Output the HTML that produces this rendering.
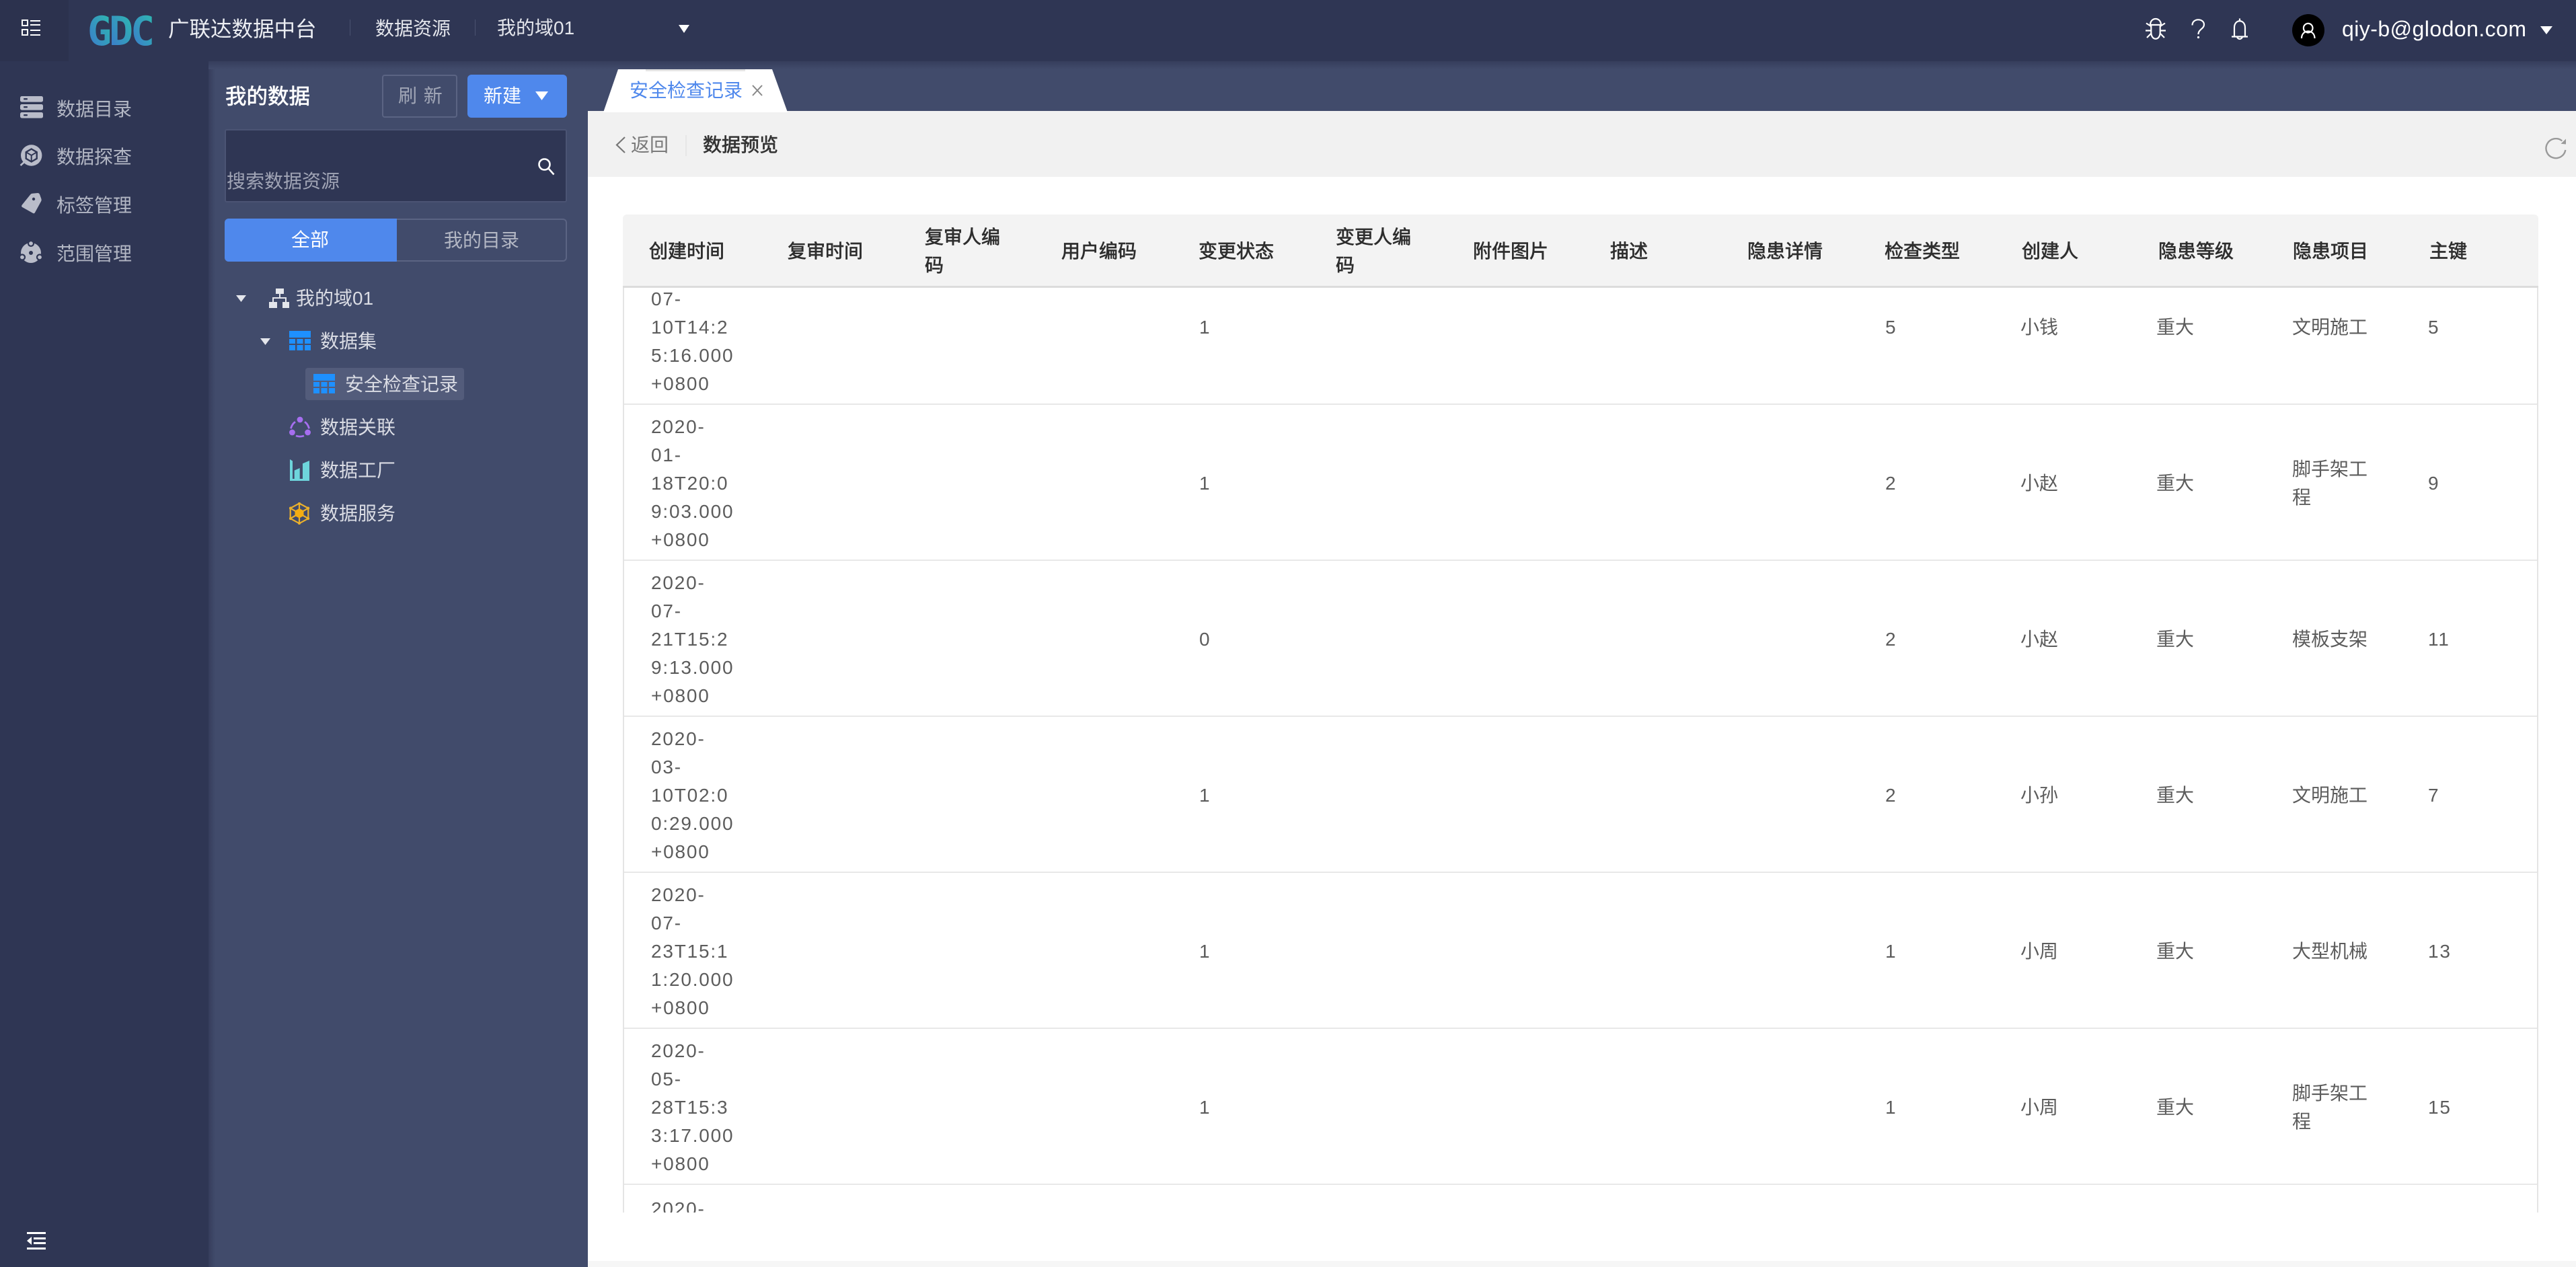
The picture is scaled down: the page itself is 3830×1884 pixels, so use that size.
<!DOCTYPE html>
<html lang="zh-CN">
<head>
<meta charset="utf-8">
<title>数据预览</title>
<style>
*{box-sizing:border-box;margin:0;padding:0}
html,body{width:3830px;height:1884px;overflow:hidden;background:#fff}
body{position:relative;font-family:"Liberation Sans","Noto Sans CJK SC",sans-serif;font-size:28px}
.a{position:absolute}
.t{position:absolute;white-space:nowrap;line-height:40px;font-size:28px}
.i{position:absolute;display:block}
.nav{color:#b3b7c4;left:84px}
.tr{color:#dadce4}
.b{-webkit-text-stroke:.7px currentColor}
.row{position:absolute;left:0;width:2848px;height:232px;border-bottom:2px solid #e8e8e8}
.c{position:absolute;top:2px;height:230px;display:flex;align-items:center;line-height:42px;color:#5c5c5c;white-space:nowrap}
.d{letter-spacing:1.8px}
.h{position:absolute;top:2px;height:106px;display:flex;align-items:center;line-height:42px;color:#2e2e2e;-webkit-text-stroke:.7px #2e2e2e;white-space:nowrap}
</style>
</head>
<body>
<!-- backgrounds -->
<div class="a" style="left:0;top:0;width:310px;height:1884px;background:#2f3654"></div>
<div class="a" style="left:310px;top:0;width:564px;height:1884px;background:#414b6b"></div>
<div class="a" style="left:874px;top:91px;width:2956px;height:75px;background:#414b6b"></div>
<div class="a" style="left:310px;top:91px;width:10px;height:1793px;background:linear-gradient(90deg,#363d5c,#414b6b)"></div>
<div class="a" style="left:310px;top:91px;width:3520px;height:12px;background:linear-gradient(180deg,#363d5c,#414b6b)"></div>
<div class="a" style="left:0;top:0;width:3830px;height:91px;background:#2f3654"></div>
<div class="a" style="left:0;top:0;width:102px;height:91px;background:#2c324e"></div>
<div class="a" style="left:874px;top:165px;width:2956px;height:98px;background:#f1f1f1"></div>
<div class="a" style="left:874px;top:1875px;width:2956px;height:9px;background:#f6f6f6"></div>

<!-- top bar -->
<svg class="i" style="left:32px;top:29px" width="28" height="25" viewBox="0 0 28 25" fill="none" stroke="#fff" stroke-width="2"><rect x="1" y="1" width="8" height="8"/><rect x="1" y="15" width="8" height="8"/><path d="M13 2h15M13 8h15M13 16h15M13 23h15"/></svg>
<svg class="i" style="left:125px;top:15px" width="110" height="60" viewBox="0 0 110 60" font-family="DejaVu Sans Mono" font-weight="700" font-size="60"><defs><linearGradient id="lg" x1="0" y1="1" x2="1" y2="0"><stop offset="0" stop-color="#3d72d0"/><stop offset="1" stop-color="#2cc0ac"/></linearGradient></defs><text x="5" y="52" fill="url(#lg)">G</text><text x="37" y="52" fill="url(#lg)">D</text><text x="69" y="52" fill="url(#lg)">C</text></svg>
<div class="t" style="left:250px;top:23px;font-size:31.5px;color:#eceef3">广联达数据中台</div>
<div class="a" style="left:520px;top:29px;width:1px;height:24px;background:#4a5270"></div>
<div class="t" style="left:558px;top:23px;color:#e4e6ec">数据资源</div>
<div class="a" style="left:706px;top:29px;width:1px;height:24px;background:#4a5270"></div>
<div class="t" style="left:739px;top:22px;color:#e4e6ec">我的域01</div>
<svg class="i" style="left:1009px;top:37px" width="16" height="12"><path d="M0 0h16L8 12z" fill="#fff"/></svg>

<svg class="i" style="left:3190px;top:26px" width="34" height="34" viewBox="0 0 34 34" fill="none" stroke="#fff" stroke-width="2.2"><path d="M7 11C7 -1 23 -1 23 11"/><path d="M8.300 11h13.400v11c0 13-13.400 13-13.400 0z"/><path d="M1 8.500L8 13M29 8.500L22 13M0 19.500h8M30 19.500h-8M2 30l6-6M28 30l-6-6"/></svg>
<svg class="i" style="left:3256px;top:28px" width="24" height="32" viewBox="0 0 24 32" fill="none" stroke="#fff" stroke-width="2.200"><path d="M3.500 9.500C3.500 -1.500 21 -1 21 8.500C21 15 12.500 15.500 12.500 23"/><circle cx="12.500" cy="27.500" r="1.600" fill="#fff" stroke="none"/></svg>
<svg class="i" style="left:3317px;top:26px" width="27" height="34" viewBox="0 0 27 34" fill="none" stroke="#fff" stroke-width="2.2"><path d="M13 1.500v4.500M5 28V15C5 2 21 2 21 15V28M1 28.500h24M9 29c2 4 6 4 8 0"/></svg>
<div class="a" style="left:3408px;top:21px;width:48px;height:48px;border-radius:50%;background:#000"></div>
<svg class="i" style="left:3419px;top:32px" width="26" height="27" viewBox="0 0 26 27" fill="none" stroke="#fff" stroke-width="2.200"><circle cx="12.700" cy="9.700" r="6.800"/><path d="M3 25c0-14 19.500-14 19.500 0"/></svg>
<div class="t" style="left:3482px;top:23px;font-size:32px;color:#fff;letter-spacing:.45px">qiy-b@glodon.com</div>
<svg class="i" style="left:3777px;top:39px" width="18" height="12"><path d="M0 0h18L9 12z" fill="#fff"/></svg>

<!-- left nav -->
<svg class="i" style="left:30px;top:143px" width="35" height="33" viewBox="0 0 35 33" fill="#b9bcc9"><rect y="0" width="34" height="8.600" rx="2.500"/><rect y="12" width="34" height="8.600" rx="2.500"/><rect y="24" width="34" height="8.600" rx="2.500"/><g fill="#2f3654"><rect x="5" y="3" width="6" height="2.400" rx="1"/><rect x="5" y="15" width="6" height="2.400" rx="1"/><rect x="5" y="27" width="6" height="2.400" rx="1"/></g></svg>
<div class="t nav" style="top:143px">数据目录</div>
<svg class="i" style="left:29px;top:214px" width="36" height="34" viewBox="0 0 36 34"><circle cx="17.700" cy="17" r="15.700" fill="#b9bcc9"/><path d="M7 27L1.500 32" stroke="#b9bcc9" stroke-width="2.600" fill="none"/><path d="M17.700 7.500l8 4.700v9.600l-8 4.700-8-4.700v-9.600z" fill="none" stroke="#2f3654" stroke-width="2.400"/><path d="M9.700 12.200l8 4.800 8-4.800M17.700 17v9.500" fill="none" stroke="#2f3654" stroke-width="2"/></svg>
<div class="t nav" style="top:214px">数据探查</div>
<svg class="i" style="left:31px;top:286px" width="32" height="34" viewBox="0 0 32 34"><path d="M14 3.500Q15 2 17 1.800L25 1Q27 1 28 3L30.500 10Q31 12 30 13.500L21 30Q20 32 18 31L2 22Q0.500 21 1.500 19z" fill="#b9bcc9"/><circle cx="19" cy="10" r="2.200" fill="#2f3654"/></svg>
<div class="t nav" style="top:286px">标签管理</div>
<svg class="i" style="left:29px;top:357px" width="36" height="34" viewBox="0 0 36 34" fill="#b9bcc9"><circle cx="17" cy="19" r="15"/><g stroke="#2f3654" stroke-width="2.200"><circle cx="17" cy="5" r="4"/><circle cx="4" cy="25.500" r="4"/><circle cx="30" cy="25.500" r="4"/></g><circle cx="17" cy="19" r="3" fill="#2f3654"/></svg>
<div class="t nav" style="top:358px">范围管理</div>
<svg class="i" style="left:40px;top:1832px" width="28" height="26" viewBox="0 0 28 26" fill="#fff"><rect width="28" height="3"/><rect y="23" width="28" height="3"/><rect x="10" y="8" width="18" height="3"/><rect x="10" y="15" width="18" height="3"/><path d="M7 7v12L0 13z"/></svg>

<!-- panel -->
<div class="t b" style="left:335px;top:123px;font-size:31.500px;color:#fff">我的数据</div>
<div class="a" style="left:568px;top:111px;width:112px;height:64px;border:2px solid #5b6483;border-radius:4px"></div>
<div class="t" style="left:592px;top:123px;color:#a2a7b7;word-spacing:2px">刷 新</div>
<div class="a" style="left:695px;top:111px;width:148px;height:64px;background:#4f88ec;border-radius:6px"></div>
<div class="t" style="left:719px;top:123px;color:#fff">新建</div>
<svg class="i" style="left:796px;top:136px" width="19" height="13"><path d="M0 0h19L9.500 13z" fill="#fff"/></svg>

<div class="a" style="left:334px;top:192px;width:509px;height:109px;background:#2f3654;border:2px solid #4b5474;border-radius:3px"></div>
<div class="t" style="left:337px;top:250px;color:#a0a4b5">搜索数据资源</div>
<svg class="i" style="left:799px;top:234px" width="27" height="27" viewBox="0 0 27 27" fill="none" stroke="#fff" stroke-width="2.600"><circle cx="10.500" cy="10.500" r="8"/><path d="M16.500 16.500l8 9"/></svg>

<div class="a" style="left:334px;top:325px;width:509px;height:64px;border:2px solid #5b6483;border-radius:6px"></div>
<div class="a" style="left:334px;top:325px;width:256px;height:64px;background:#4f88ec;border-radius:6px 0 0 6px"></div>
<div class="t" style="left:433px;top:337px;color:#fff">全部</div>
<div class="t" style="left:660px;top:338px;color:#b3b7c4">我的目录</div>

<!-- tree -->
<svg class="i" style="left:351px;top:439px" width="15" height="10"><path d="M0 0h15L7.500 10z" fill="#e4e6ec"/></svg>
<svg class="i" style="left:400px;top:429px" width="30" height="29" viewBox="0 0 30 29" fill="#e4e6ec"><rect x="10" y="0" width="12" height="8"/><rect x="0" y="20" width="12" height="9"/><rect x="20" y="20" width="10" height="9"/><path d="M15 8h2v5h9v7h-2v-5H7v5H5v-7h10z"/></svg>
<div class="t tr" style="left:440px;top:424px">我的域01</div>
<svg class="i" style="left:387px;top:503px" width="15" height="10"><path d="M0 0h15L7.500 10z" fill="#e4e6ec"/></svg>
<svg class="i" style="left:430px;top:492px" width="32" height="29" viewBox="0 0 32 29" fill="#1e90ff"><rect width="32" height="10"/><rect y="12" width="9" height="7"/><rect x="11.500" y="12" width="9" height="7"/><rect x="23" y="12" width="9" height="7"/><rect y="21" width="9" height="8"/><rect x="11.500" y="21" width="9" height="8"/><rect x="23" y="21" width="9" height="8"/></svg>
<div class="t tr" style="left:476px;top:488px">数据集</div>
<div class="a" style="left:454px;top:547px;width:236px;height:48px;background:#535c7b;border-radius:4px"></div>
<svg class="i" style="left:466px;top:556px" width="32" height="29" viewBox="0 0 32 29" fill="#1e90ff"><rect width="32" height="10"/><rect y="12" width="9" height="7"/><rect x="11.500" y="12" width="9" height="7"/><rect x="23" y="12" width="9" height="7"/><rect y="21" width="9" height="8"/><rect x="11.500" y="21" width="9" height="8"/><rect x="23" y="21" width="9" height="8"/></svg>
<div class="t tr" style="left:513px;top:552px">安全检查记录</div>
<svg class="i" style="left:430px;top:619px" width="32" height="33" viewBox="0 0 32 33"><g fill="#a66ef0"><circle cx="16" cy="5" r="4.400"/><circle cx="4.400" cy="24" r="4.400"/><circle cx="27.600" cy="24" r="4.400"/></g><g fill="none" stroke="#a66ef0" stroke-width="2.800"><path d="M2.500 18.300Q4 11.500 9 8.300M29.500 18.300Q28 11.500 23 8.300M10 29Q16 31.300 22 29"/></g></svg>
<div class="t tr" style="left:476px;top:616px">数据关联</div>
<svg class="i" style="left:431px;top:683px" width="29" height="32" viewBox="0 0 29 32" fill="#6ed5dc"><path d="M0 0l4 2.500V30H0z"/><path d="M6.700 16.500l8-3.500V30h-8z"/><path d="M19 6.300L29 2V30H19z"/><rect y="29" width="29" height="3"/></svg>
<div class="t tr" style="left:476px;top:680px">数据工厂</div>
<svg class="i" style="left:430px;top:747px" width="31" height="33" viewBox="0 0 31 33"><g fill="none" stroke="#eab02c" stroke-width="2.200"><path d="M15 1.500L28.300 8.700V24L15 31.300 1.700 24V8.700z"/><path d="M15 1.500V31.300M1.700 8.700L28.300 24M28.300 8.700L1.700 24"/></g><path d="M15 9l6.500 3.500v7.500L15 23.500 8.500 20v-7.500z" fill="#f4ad12"/><g fill="#eab02c"><circle cx="15" cy="2" r="2.200"/><circle cx="15" cy="31" r="2.200"/><circle cx="2" cy="8.700" r="2.200"/><circle cx="28" cy="8.700" r="2.200"/><circle cx="2" cy="24" r="2.200"/><circle cx="28" cy="24" r="2.200"/></g></svg>
<div class="t tr" style="left:476px;top:744px">数据服务</div>

<!-- tab -->
<svg class="i" style="left:896px;top:102px" width="276" height="65"><path d="M23 1H252L275 65H1z" fill="#fff"/><rect x="64" y="1" width="148" height="3" fill="#e3e3e3"/></svg>
<div class="t" style="left:936px;top:115px;color:#4f88ec">安全检查记录</div>
<svg class="i" style="left:1117px;top:125px" width="18" height="19" fill="none" stroke="#888" stroke-width="2"><path d="M2 2l14 15M16 2L2 17"/></svg>

<!-- breadcrumb -->
<svg class="i" style="left:914px;top:203px" width="18" height="25" fill="none" stroke="#777" stroke-width="2.200"><path d="M15 1L3 12.500 15 24"/></svg>
<div class="t" style="left:938px;top:196px;color:#7a7a7a">返回</div>
<div class="a" style="left:1019px;top:201px;width:2px;height:31px;background:#e6e6e6"></div>
<div class="t b" style="left:1045px;top:196px;color:#333">数据预览</div>
<svg class="i" style="left:3784px;top:205px" width="34" height="34" viewBox="0 0 34 34" fill="none" stroke="#9a9a9a" stroke-width="2.400"><path d="M25.300 4.500A14.500 14.500 0 1 0 30.300 18"/><path d="M31 1.500v8l-7.500-.7z" stroke="none" fill="#9a9a9a"/></svg>

<!-- table -->
<div class="a" style="left:926px;top:319px;width:2848px;height:106px;background:#f3f3f3;border-radius:6px 6px 0 0"></div>
<div class="a" style="left:926px;top:425px;width:2848px;height:3px;background:#dcdcdc"></div>
<div class="a" style="left:926px;top:319px;width:2848px;height:106px">
<div class="h" style="left:39px">创建时间</div>
<div class="h" style="left:245px">复审时间</div>
<div class="h" style="left:449px">复审人编<br>码</div>
<div class="h" style="left:652px">用户编码</div>
<div class="h" style="left:856px">变更状态</div>
<div class="h" style="left:1060px">变更人编<br>码</div>
<div class="h" style="left:1264px">附件图片</div>
<div class="h" style="left:1468px">描述</div>
<div class="h" style="left:1672px">隐患详情</div>
<div class="h" style="left:1876px">检查类型</div>
<div class="h" style="left:2080px">创建人</div>
<div class="h" style="left:2283px">隐患等级</div>
<div class="h" style="left:2483px">隐患项目</div>
<div class="h" style="left:2686px">主键</div>
</div>
<div class="a" style="left:926px;top:428px;width:2848px;height:1375px;overflow:hidden;border-left:2px solid #e4e4e4;border-right:2px solid #e4e4e4">
<div class="row" style="top:-58px">
<div class="c d" style="left:40px">2020-<br>07-<br>10T14:2<br>5:16.000<br>+0800</div>
<div class="c d" style="left:855px">1</div><div class="c d" style="left:1875px">5</div><div class="c" style="left:2076px">小钱</div><div class="c" style="left:2278px">重大</div><div class="c" style="left:2480px">文明施工</div><div class="c d" style="left:2682px">5</div>
</div>
<div class="row" style="top:174px">
<div class="c d" style="left:40px">2020-<br>01-<br>18T20:0<br>9:03.000<br>+0800</div>
<div class="c d" style="left:855px">1</div><div class="c d" style="left:1875px">2</div><div class="c" style="left:2076px">小赵</div><div class="c" style="left:2278px">重大</div><div class="c" style="left:2480px">脚手架工<br>程</div><div class="c d" style="left:2682px">9</div>
</div>
<div class="row" style="top:406px">
<div class="c d" style="left:40px">2020-<br>07-<br>21T15:2<br>9:13.000<br>+0800</div>
<div class="c d" style="left:855px">0</div><div class="c d" style="left:1875px">2</div><div class="c" style="left:2076px">小赵</div><div class="c" style="left:2278px">重大</div><div class="c" style="left:2480px">模板支架</div><div class="c d" style="left:2682px">11</div>
</div>
<div class="row" style="top:638px">
<div class="c d" style="left:40px">2020-<br>03-<br>10T02:0<br>0:29.000<br>+0800</div>
<div class="c d" style="left:855px">1</div><div class="c d" style="left:1875px">2</div><div class="c" style="left:2076px">小孙</div><div class="c" style="left:2278px">重大</div><div class="c" style="left:2480px">文明施工</div><div class="c d" style="left:2682px">7</div>
</div>
<div class="row" style="top:870px">
<div class="c d" style="left:40px">2020-<br>07-<br>23T15:1<br>1:20.000<br>+0800</div>
<div class="c d" style="left:855px">1</div><div class="c d" style="left:1875px">1</div><div class="c" style="left:2076px">小周</div><div class="c" style="left:2278px">重大</div><div class="c" style="left:2480px">大型机械</div><div class="c d" style="left:2682px">13</div>
</div>
<div class="row" style="top:1102px">
<div class="c d" style="left:40px">2020-<br>05-<br>28T15:3<br>3:17.000<br>+0800</div>
<div class="c d" style="left:855px">1</div><div class="c d" style="left:1875px">1</div><div class="c" style="left:2076px">小周</div><div class="c" style="left:2278px">重大</div><div class="c" style="left:2480px">脚手架工<br>程</div><div class="c d" style="left:2682px">15</div>
</div>
<div class="row" style="top:1334px;height:41px;border:0;overflow:hidden">
<div class="c d" style="left:40px;top:15px;height:42px">2020-</div>
</div>
</div>
</body>
</html>
